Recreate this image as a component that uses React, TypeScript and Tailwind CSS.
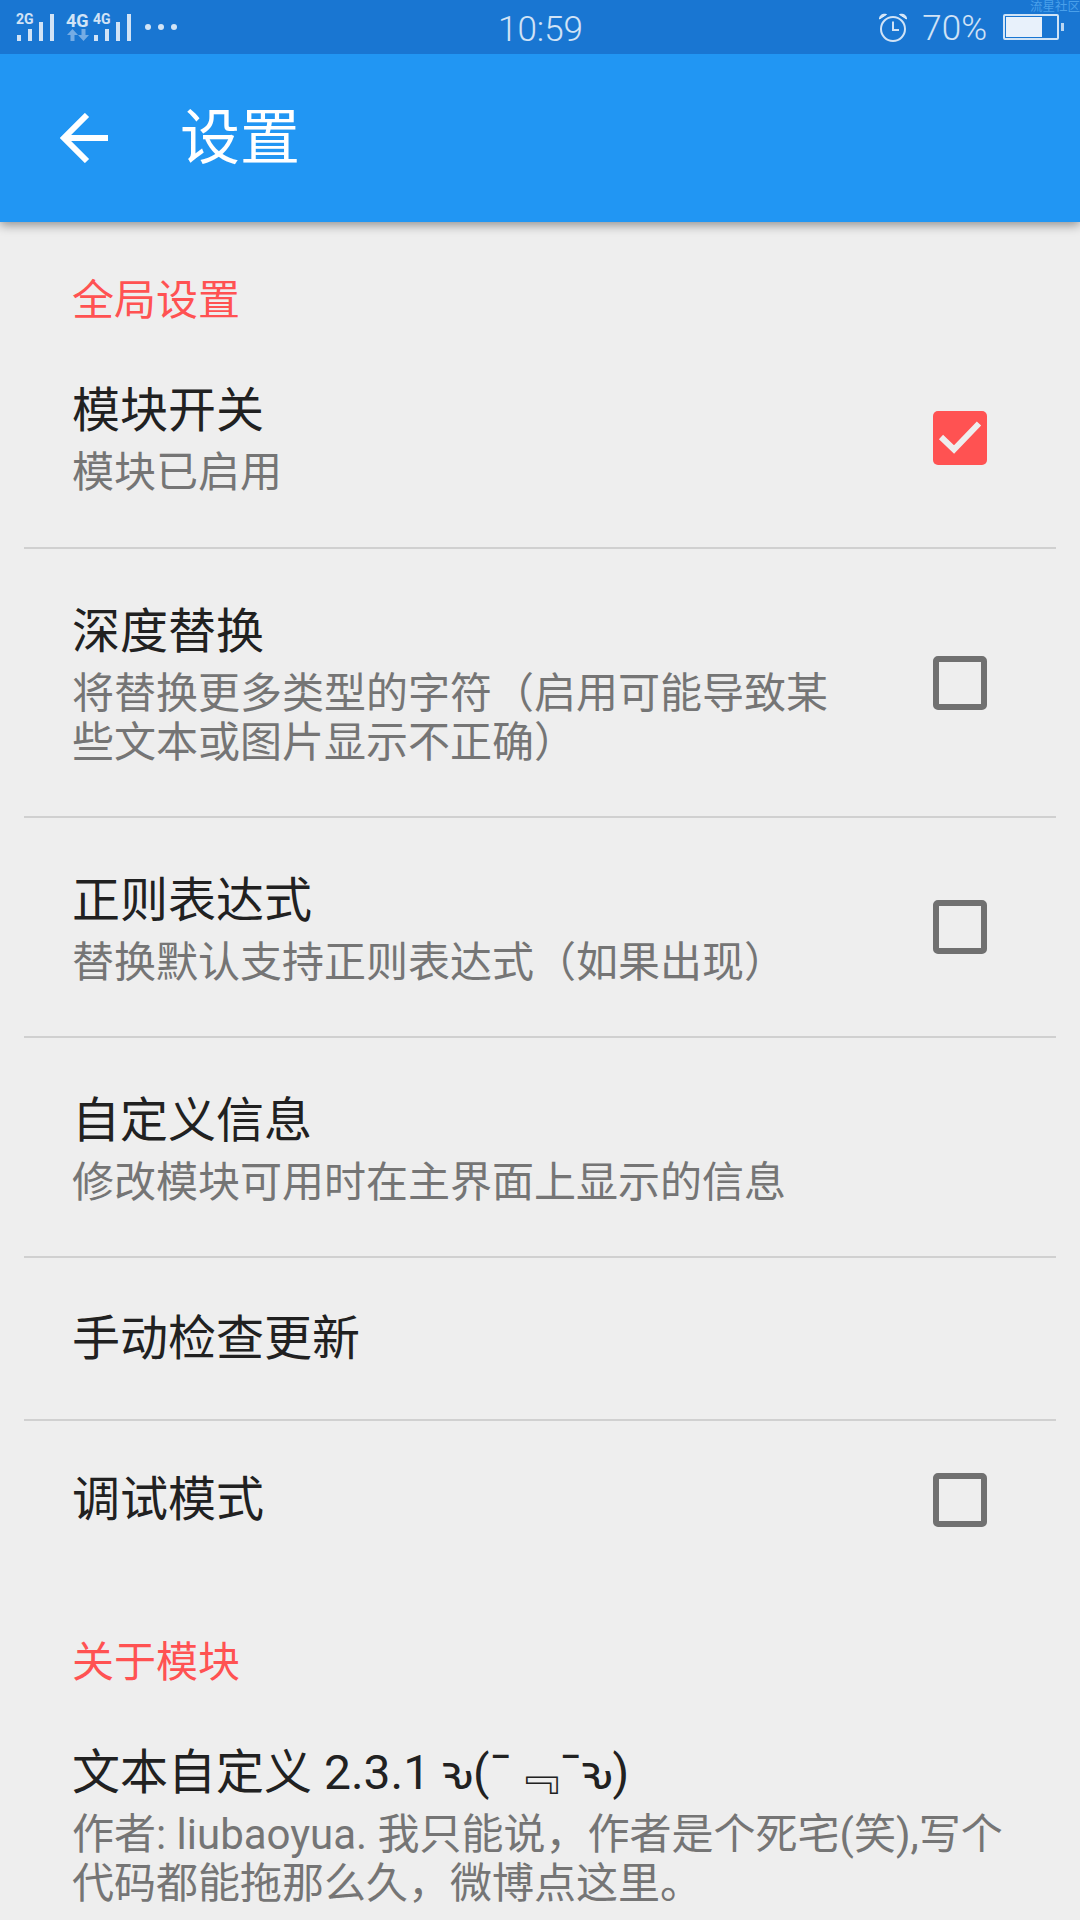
import { ReactNode } from 'react'

// cell signal with the network label sitting over the short bars
function Signal({ label }: { label: string }) {
  return (
    <div className="relative h-[27px] w-[38px]">
      <span className="absolute -left-[1px] top-0 text-[14px] leading-[10px] font-bold">{label}</span>
      <svg width="38" height="27" viewBox="0 0 38 27" fill="#ffffff" fillOpacity="0.8">
        <rect x="0" y="21" width="4" height="6" />
        <rect x="11" y="15" width="4" height="12" />
        <rect x="22" y="8" width="4" height="19" />
        <rect x="33" y="0" width="4" height="27" />
      </svg>
    </div>
  )
}

function DataArrows() {
  return (
    <svg width="22" height="12" viewBox="0 0 22 12" fill="#ffffff" fillOpacity="0.4">
      <path d="M5.5 0 L11 6 H7.5 V12 H3.5 V6 H0 Z" />
      <path d="M16.5 12 L22 6 H18.5 V0 H14.5 V6 H11 Z" />
    </svg>
  )
}

function AlarmIcon() {
  return (
    <svg width="30" height="30" viewBox="0 0 30 30" fill="none" stroke="#ffffff" strokeOpacity="0.8" strokeWidth="2">
      <circle cx="15" cy="17" r="12" />
      <path d="M15 9.5 V18 H21" />
      <path d="M1.5 7 C1.5 3 5 1.5 8.5 2.5 Z" fill="#ffffff" fillOpacity="0.8" strokeWidth="1" />
      <path d="M28.5 7 C28.5 3 25 1.5 21.5 2.5 Z" fill="#ffffff" fillOpacity="0.8" strokeWidth="1" />
    </svg>
  )
}

function BatteryIcon() {
  return (
    <div className="flex items-center">
      <div className="h-[26px] w-[56px] rounded-[2px] border-2 border-white/80 p-[1px]">
        <div className="h-full w-[36px] bg-white/90" />
      </div>
      <div className="ml-[2px] h-[8px] w-[3px] bg-white/70" />
    </div>
  )
}

function StatusBar() {
  return (
    <div className="relative flex h-[54px] shrink-0 items-center bg-[#1976d2] pl-[17px] pr-[16px] text-white/80">
      <div className="flex flex-1 items-center">
        <Signal label="2G" />
        <div className="ml-[11px] flex w-[28px] flex-col items-start">
          <span className="text-[18px] leading-[15px] font-bold">4G</span>
          <div className="mt-[1px] ml-[1px]"><DataArrows /></div>
        </div>
        <Signal label="4G" />
        <div className="ml-[13px] flex gap-[7px]">
          <div className="h-[6px] w-[6px] rounded-full bg-white/80" />
          <div className="h-[6px] w-[6px] rounded-full bg-white/80" />
          <div className="h-[6px] w-[6px] rounded-full bg-white/80" />
        </div>
      </div>
      <span className="mt-[4px] text-[35px] leading-none font-light">10:59</span>
      <div className="flex flex-1 items-center justify-end">
        <AlarmIcon />
        <span className="ml-[14px] mt-[2px] text-[35px] leading-none font-light">70%</span>
        <div className="ml-[16px]"><BatteryIcon /></div>
      </div>
      <span className="absolute right-0 top-0 text-[12.5px] leading-[13px] text-[#4aa0ea]">流星社区</span>
    </div>
  )
}

function Checkbox({ checked }: { checked?: boolean }) {
  if (checked) {
    return (
      <div className="h-[54px] w-[54px] shrink-0 rounded-[5px] bg-[#ff5252]">
        <svg width="54" height="54" viewBox="0 0 54 54" fill="none">
          <path d="M8 26 L21 38.5 L46 12.5" stroke="#eeeeee" strokeWidth="6" />
        </svg>
      </div>
    )
  }
  return <div className="h-[54px] w-[54px] shrink-0 rounded-[5px] border-[6px] border-[#707070]" />
}

function Row({ title, summary, check, height, divider = true }: { title: ReactNode; summary?: ReactNode; check?: 'on' | 'off'; height: string; divider?: boolean }) {
  return (
    <div className={`mx-6 flex shrink-0 items-center justify-between pl-[48px] pr-[69px] ${height} ${divider ? 'border-b-2 border-[#d0d0d0]' : ''}`}>
      <div className={check ? 'max-w-[760px]' : 'flex-1 -mr-[40px]'}>
        <div className="text-[48px] leading-[66px] text-[#212121]">{title}</div>
        {summary && <div className="mt-[4px] text-[42px] leading-[49px] text-[#757575]">{summary}</div>}
      </div>
      {check && <Checkbox checked={check === 'on'} />}
    </div>
  )
}

function SectionTitle({ children, height }: { children: ReactNode; height: string }) {
  return <div className={`flex shrink-0 items-end pl-[72px] text-[42px] leading-[54px] text-[#ff5252] ${height}`}>{children}</div>
}

export default function App() {
  return (
    <div className="flex h-[1920px] w-[1080px] flex-col overflow-hidden bg-[#eeeeee] font-['Roboto','Noto_Sans_CJK_SC',sans-serif]">
      <StatusBar />
      <div className="flex h-[168px] shrink-0 items-center bg-[#2196f3] pl-[60px] text-white shadow-[0_3px_10px_rgba(0,0,0,0.4)]">
        <svg width="48" height="50" viewBox="0 0 48 50" fill="none" stroke="#ffffff" strokeWidth="6">
          <path d="M48 25 H4 M27 2 L4 25 L27 48" />
        </svg>
        <span className="ml-[72px] mt-[2px] text-[60px]">设置</span>
      </div>
      <SectionTitle height="h-[106px]">全局设置</SectionTitle>
      <Row height="h-[221px]" title="模块开关" summary="模块已启用" check="on" />
      <Row height="h-[269px]" title="深度替换" summary="将替换更多类型的字符（启用可能导致某些文本或图片显示不正确）" check="off" />
      <Row height="h-[220px]" title="正则表达式" summary="替换默认支持正则表达式（如果出现）" check="off" />
      <Row height="h-[220px]" title="自定义信息" summary="修改模块可用时在主界面上显示的信息" />
      <Row height="h-[163px]" title="手动检查更新" />
      <Row height="h-[157px]" title="调试模式" check="off" divider={false} />
      <SectionTitle height="h-[112px]">关于模块</SectionTitle>
      <Row
        height="h-[268px]"
        title="文本自定义 2.3.1 ԅ(¯﹃¯ԅ)"
        summary="作者: liubaoyua. 我只能说，作者是个死宅(笑),写个代码都能拖那么久，微博点这里。"
        divider={false}
      />
    </div>
  )
}
